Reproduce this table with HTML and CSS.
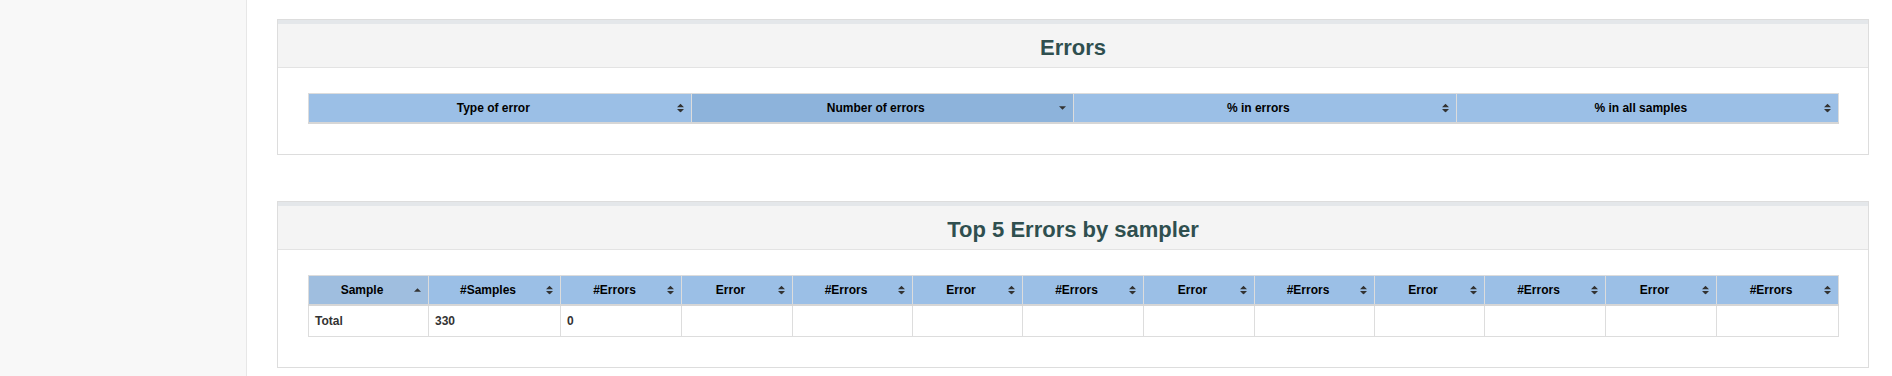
FILE: index.html
```html
<!DOCTYPE html>
<html lang="en">

<head>
    <meta charset="UTF-8">
    <meta name="viewport" content="width=device-width, initial-scale=1.0">
    <title>Errors</title>
    <link rel="stylesheet" href="styles.css">
</head>

<body>
    <div class="sidebar"></div>

    <div class="page-wrapper">
        <div class="panel">
            <div class="panel-heading">
                <h2>Errors</h2>
            </div>
            <div class="panel-body">
                <table class="data-table errors-table">
                    <thead>
                        <tr>
                            <th>Type of error<span class="sort"><svg width="7" height="9" viewBox="0 0 8 10"><path d="M0 4L4 0L8 4Z M0 6L8 6L4 10Z" /></svg></span></th>
                            <th class="sorted">Number of errors<span class="sort down"><svg width="7" height="4" viewBox="0 0 8 4"><path d="M0 0L8 0L4 4Z" /></svg></span></th>
                            <th>% in errors<span class="sort"><svg width="7" height="9" viewBox="0 0 8 10"><path d="M0 4L4 0L8 4Z M0 6L8 6L4 10Z" /></svg></span></th>
                            <th>% in all samples<span class="sort"><svg width="7" height="9" viewBox="0 0 8 10"><path d="M0 4L4 0L8 4Z M0 6L8 6L4 10Z" /></svg></span></th>
                        </tr>
                    </thead>
                </table>
            </div>
        </div>

        <div class="panel">
            <div class="panel-heading">
                <h2>Top 5 Errors by sampler</h2>
            </div>
            <div class="panel-body">
                <table class="data-table top-table">
                    <colgroup>
                        <col style="width: 120px">
                        <col style="width: 132px">
                        <col style="width: 121px">
                        <col style="width: 111px">
                        <col style="width: 120px">
                        <col style="width: 110px">
                        <col style="width: 121px">
                        <col style="width: 111px">
                        <col style="width: 120px">
                        <col style="width: 110px">
                        <col style="width: 121px">
                        <col style="width: 111px">
                        <col style="width: 122px">
                    </colgroup>
                    <thead>
                        <tr id="topHead"></tr>
                    </thead>
                    <tbody>
                        <tr>
                            <td>Total</td>
                            <td>330</td>
                            <td>0</td>
                            <td></td>
                            <td></td>
                            <td></td>
                            <td></td>
                            <td></td>
                            <td></td>
                            <td></td>
                            <td></td>
                            <td></td>
                            <td></td>
                        </tr>
                    </tbody>
                </table>
            </div>
        </div>
    </div>

    <script>
        const both = '<span class="sort"><svg width="7" height="9" viewBox="0 0 8 10"><path d="M0 4L4 0L8 4Z M0 6L8 6L4 10Z" /></svg></span>';
        const up = '<span class="sort up"><svg width="7" height="4" viewBox="0 0 8 4"><path d="M0 4L4 0L8 4Z" /></svg></span>';
        const headers = ['#Samples', '#Errors'];

        for (let i = 0; i < 5; i++) {
            headers.push('Error', '#Errors');
        }

        let html = '<th class="sorted-asc">Sample' + up + '</th>';
        headers.forEach(name => {
            html += '<th>' + name + both + '</th>';
        });
        document.getElementById('topHead').innerHTML = html;
    </script>
</body>

</html>
```

FILE: styles.css
```css
* {
    box-sizing: border-box;
    margin: 0;
    padding: 0;
}

html,
body {
    height: 100%;
}

body {
    display: flex;
    background: #fff;
    font-family: 'Liberation Sans', Arial, sans-serif;
    color: #333;
    overflow: hidden;
}

.sidebar {
    width: 247px;
    flex-shrink: 0;
    background-color: #f8f8f8;
    border-right: 1px solid #e7e7e7;
}

.page-wrapper {
    flex: 1;
    padding: 19px 23px 0 30px;
}

.panel {
    border: 1px solid #dddddd;
    background: #fff;
    margin-bottom: 46px;
}

.panel-heading {
    background-color: #f4f4f4;
    border-top: 4px solid #e4e7ea;
    border-bottom: 1px solid #e3e3e3;
    padding: 11px 15px 6px;
    text-align: center;
}

.panel-heading h2 {
    font-size: 22px;
    line-height: 26px;
    font-weight: bold;
    color: #2f4f4f;
}

.panel-body {
    padding: 25px 29px 30px 30px;
}

.data-table {
    width: 100%;
    table-layout: fixed;
    border-collapse: collapse;
    font-size: 12px;
    font-weight: bold;
}

.data-table th {
    position: relative;
    background-color: #9bbfe6;
    color: #000;
    text-align: center;
    line-height: 16px;
    padding: 6px 21px 6px 8px;
    border: 1px solid #dcdcdc;
    border-bottom: 2px solid #d6d6d6;
    white-space: nowrap;
}

.data-table th.sorted {
    background-color: #8db3db;
}

.data-table th.sorted-asc {
    background-color: #9fbedf;
}

.data-table td {
    line-height: 16px;
    padding: 7px 6px;
    border: 1px solid #dddddd;
    color: #333;
}

.sort {
    position: absolute;
    right: 7px;
    top: 50%;
    display: flex;
    transform: translateY(-50%);
}

.sort svg {
    fill: #333;
}
```
